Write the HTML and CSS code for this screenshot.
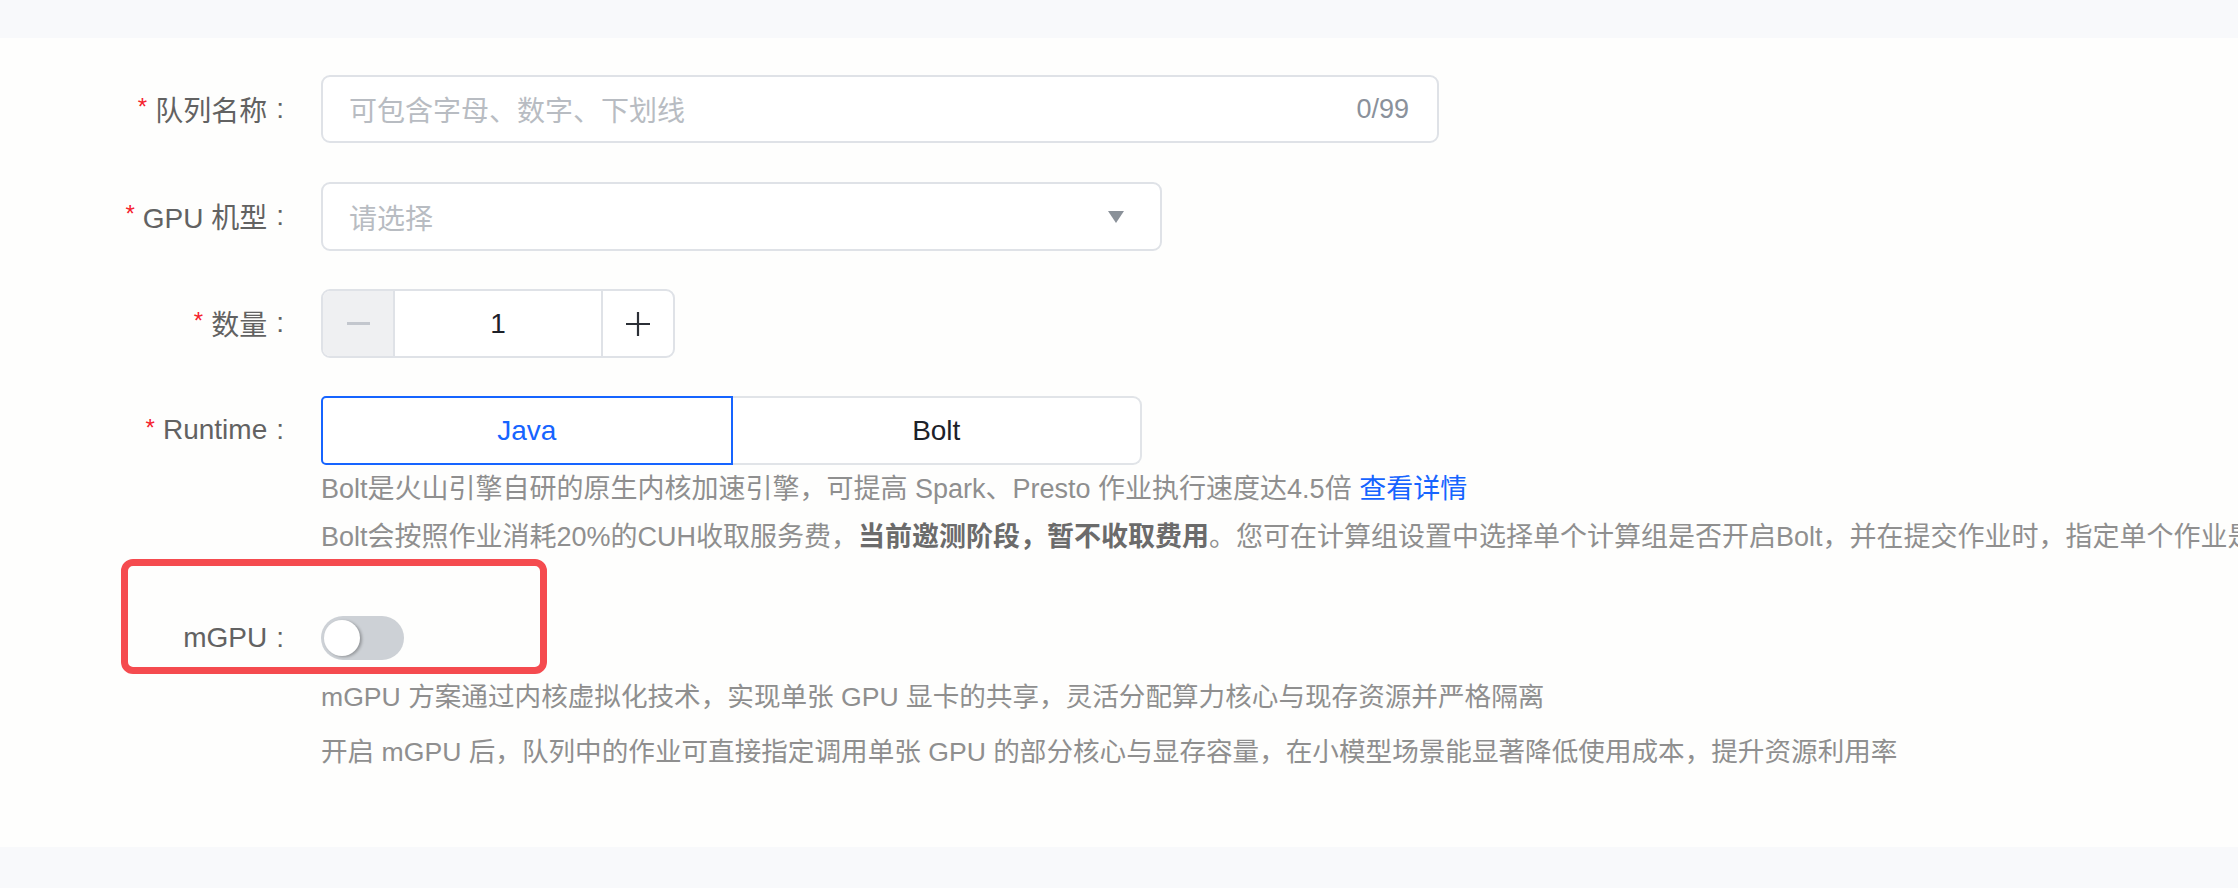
FILE: index.html
```html
<!DOCTYPE html>
<html lang="zh-CN">
<head>
<meta charset="utf-8">
<title>创建队列</title>
<link rel="stylesheet" href="styles.css">
</head>
<body>
<div class="topbar"></div>
<main class="panel">
  <form class="form">
    <div class="item">
      <div class="label"><span class="req">*</span>队列名称<span class="colon">:</span></div>
      <div class="control">
        <div class="input input-name">
          <span class="ph">可包含字母、数字、下划线</span>
          <span class="count">0/99</span>
        </div>
      </div>
    </div>

    <div class="item">
      <div class="label"><span class="req">*</span>GPU 机型<span class="colon">:</span></div>
      <div class="control">
        <div class="input input-select">
          <span class="ph">请选择</span>
          <span class="arrow"></span>
        </div>
      </div>
    </div>

    <div class="item">
      <div class="label"><span class="req">*</span>数量<span class="colon">:</span></div>
      <div class="control">
        <div class="stepper">
          <span class="step step-minus"><span class="minus-bar"></span></span>
          <span class="step-value">1</span>
          <span class="step step-plus">
            <svg width="26" height="26" viewBox="0 0 26 26"><path d="M13 1v24M1 13h24" stroke="#2b2f36" stroke-width="2.2" fill="none"/></svg>
          </span>
        </div>
      </div>
    </div>

    <div class="item">
      <div class="label"><span class="req">*</span>Runtime<span class="colon">:</span></div>
      <div class="control">
        <div class="segmented">
          <span class="seg seg-active">Java</span>
          <span class="seg">Bolt</span>
        </div>
        <p class="help">Bolt是火山引擎自研的原生内核加速引擎，可提高 Spark、Presto 作业执行速度达4.5倍 <a class="link">查看详情</a></p>
        <p class="help help-clip">Bolt会按照作业消耗20%的CUH收取服务费，<b>当前邀测阶段，暂不收取费用</b>。您可在计算组设置中选择单个计算组是否开启Bolt，并在提交作业时，指定单个作业是否使用Bolt加速。</p>
      </div>
    </div>

    <div class="item item-mgpu">
      <div class="label label-short">mGPU<span class="colon">:</span></div>
      <div class="control">
        <div class="switch"><span class="knob"></span></div>
        <p class="help help-wide">mGPU 方案通过内核虚拟化技术，实现单张 GPU 显卡的共享，灵活分配算力核心与现存资源并严格隔离</p>
        <p class="help help-wide">开启 mGPU 后，队列中的作业可直接指定调用单张 GPU 的部分核心与显存容量，在小模型场景能显著降低使用成本，提升资源利用率</p>
      </div>
      <div class="highlight"></div>
    </div>
  </form>
</main>
<div class="bottombar"></div>
</body>
</html>
```

FILE: styles.css
```css
html, body {
  margin: 0;
  padding: 0;
  overflow: hidden;
  background: #f8f9fb;
}

body {
  font-family: "Liberation Sans", "Noto Sans CJK SC", sans-serif;
  color: #1d2129;
  width: 2238px;
  height: 888px;
}

.topbar {
  height: 38px;
  background: #f8f9fb;
}

.bottombar {
  height: 41px;
  background: #f8f9fb;
}

.panel {
  height: 809px;
  box-sizing: border-box;
  background: #fefefd;
  padding-top: 37px;
  overflow: hidden;
}

.form {
  display: flex;
  flex-direction: column;
}

.item {
  display: grid;
  grid-template-columns: 321px auto;
  margin-bottom: 38px;
  align-items: start;
}

.item:first-child {
  margin-bottom: 39px;
}

.label {
  height: 68px;
  display: flex;
  align-items: center;
  justify-content: flex-end;
  padding-right: 37px;
  font-size: 28px;
  color: #626262;
  white-space: nowrap;
}

.req {
  color: #f5222d;
  font-size: 24px;
  margin-right: 8px;
  position: relative;
  top: -2px;
}

.colon {
  margin-left: 9px;
}

.control {
  display: flex;
  flex-direction: column;
  align-items: flex-start;
  min-width: 0;
}

.input {
  box-sizing: border-box;
  height: 68px;
  border: 2px solid #dfe2e7;
  border-radius: 9px;
  background: #fff;
  display: flex;
  align-items: center;
  padding: 0 28px 0 26px;
  font-size: 28px;
}

.input-name {
  width: 1118px;
}

.input-select {
  width: 841px;
  height: 69px;
}

.ph {
  color: #b8bcc2;
  flex: 1;
}

.count {
  color: #8a919b;
  font-size: 27px;
}

.arrow {
  width: 0;
  height: 0;
  border-left: 8px solid transparent;
  border-right: 8px solid transparent;
  border-top: 12px solid #8a9199;
  margin-right: 8px;
}

.stepper {
  box-sizing: border-box;
  width: 354px;
  height: 69px;
  border: 2px solid #dfe2e7;
  border-radius: 9px;
  display: flex;
  overflow: hidden;
  background: #fff;
}

.step {
  width: 70px;
  display: flex;
  align-items: center;
  justify-content: center;
}

.step-minus {
  background: #eff0f2;
  border-right: 2px solid #dfe2e7;
}

.minus-bar {
  width: 23px;
  height: 3px;
  background: #c3c7ce;
}

.step-plus {
  border-left: 2px solid #dfe2e7;
}

.step-value {
  flex: 1;
  display: flex;
  align-items: center;
  justify-content: center;
  font-size: 28px;
  color: #1d2129;
}

.segmented {
  display: flex;
  height: 69px;
  width: 821px;
}

.seg {
  box-sizing: border-box;
  flex: 1;
  display: flex;
  align-items: center;
  justify-content: center;
  font-size: 28px;
  color: #1d2129;
  border: 2px solid #e1e4e8;
  border-left: none;
  border-radius: 0 9px 9px 0;
  background: #fff;
}

.seg-active {
  color: #1664ff;
  border: 2px solid #1664ff;
  border-radius: 5px 0 0 5px;
}

.help {
  margin: 0;
  font-size: 27px;
  line-height: 48px;
  color: #8f8f8f;
  white-space: nowrap;
}

.help b {
  color: #6b6b6b;
  font-weight: 700;
}

.link {
  color: #1664ff;
  text-decoration: none;
}

.item-mgpu {
  position: relative;
  margin-top: 17px;
}

.label-short {
  height: 44px;
}

.switch {
  position: relative;
  width: 83px;
  height: 44px;
  border-radius: 22px;
  background: #cdd1d6;
  margin-bottom: 10px;
}

.knob {
  position: absolute;
  left: 3px;
  top: 4px;
  width: 36px;
  height: 36px;
  border-radius: 50%;
  background: #fff;
  box-shadow: 2px 1px 3px rgba(0, 0, 0, 0.28);
}

.help-wide {
  line-height: 55px;
  font-size: 26.6px;
}

.highlight {
  position: absolute;
  left: 121px;
  top: -57px;
  width: 426px;
  height: 115px;
  box-sizing: border-box;
  border: 7px solid #f54b4f;
  border-radius: 12px;
}
```
